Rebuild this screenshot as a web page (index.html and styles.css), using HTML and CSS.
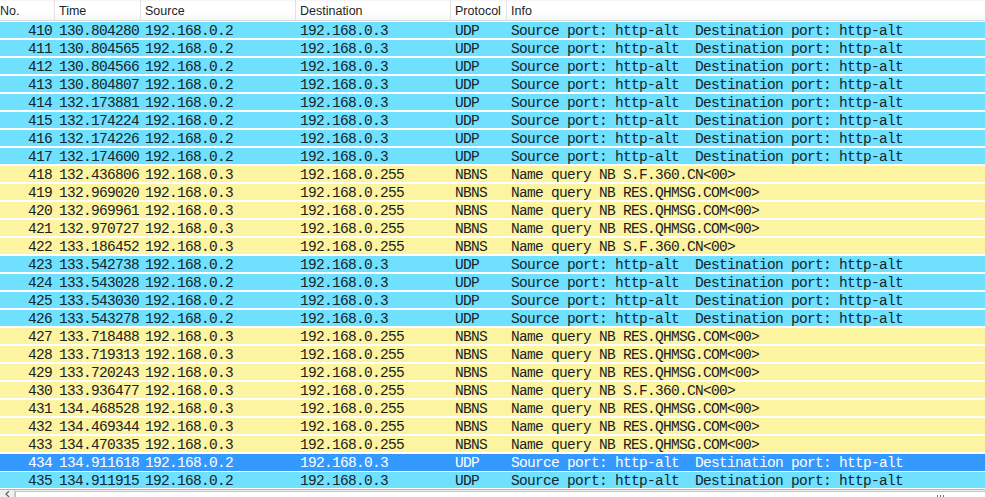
FILE: index.html
```html
<!DOCTYPE html>
<html>
<head>
<meta charset="utf-8">
<link rel="stylesheet" href="styles.css">
</head>
<body>
<div class="list">
  <div class="head">
    <div class="hc c-no">No.</div>
    <div class="hc">Time</div>
    <div class="hc">Source</div>
    <div class="hc">Destination</div>
    <div class="hc">Protocol</div>
    <div class="hc">Info</div>
  </div>
  <div class="rows">
    <div class="row udp"><span class="no">410</span><span>130.804280</span><span>192.168.0.2</span><span>192.168.0.3</span><span>UDP</span><span>Source port: http-alt  Destination port: http-alt</span></div>
    <div class="row udp"><span class="no">411</span><span>130.804565</span><span>192.168.0.2</span><span>192.168.0.3</span><span>UDP</span><span>Source port: http-alt  Destination port: http-alt</span></div>
    <div class="row udp"><span class="no">412</span><span>130.804566</span><span>192.168.0.2</span><span>192.168.0.3</span><span>UDP</span><span>Source port: http-alt  Destination port: http-alt</span></div>
    <div class="row udp"><span class="no">413</span><span>130.804807</span><span>192.168.0.2</span><span>192.168.0.3</span><span>UDP</span><span>Source port: http-alt  Destination port: http-alt</span></div>
    <div class="row udp"><span class="no">414</span><span>132.173881</span><span>192.168.0.2</span><span>192.168.0.3</span><span>UDP</span><span>Source port: http-alt  Destination port: http-alt</span></div>
    <div class="row udp"><span class="no">415</span><span>132.174224</span><span>192.168.0.2</span><span>192.168.0.3</span><span>UDP</span><span>Source port: http-alt  Destination port: http-alt</span></div>
    <div class="row udp"><span class="no">416</span><span>132.174226</span><span>192.168.0.2</span><span>192.168.0.3</span><span>UDP</span><span>Source port: http-alt  Destination port: http-alt</span></div>
    <div class="row udp"><span class="no">417</span><span>132.174600</span><span>192.168.0.2</span><span>192.168.0.3</span><span>UDP</span><span>Source port: http-alt  Destination port: http-alt</span></div>
    <div class="row nbns"><span class="no">418</span><span>132.436806</span><span>192.168.0.3</span><span>192.168.0.255</span><span>NBNS</span><span>Name query NB S.F.360.CN&lt;00&gt;</span></div>
    <div class="row nbns"><span class="no">419</span><span>132.969020</span><span>192.168.0.3</span><span>192.168.0.255</span><span>NBNS</span><span>Name query NB RES.QHMSG.COM&lt;00&gt;</span></div>
    <div class="row nbns"><span class="no">420</span><span>132.969961</span><span>192.168.0.3</span><span>192.168.0.255</span><span>NBNS</span><span>Name query NB RES.QHMSG.COM&lt;00&gt;</span></div>
    <div class="row nbns"><span class="no">421</span><span>132.970727</span><span>192.168.0.3</span><span>192.168.0.255</span><span>NBNS</span><span>Name query NB RES.QHMSG.COM&lt;00&gt;</span></div>
    <div class="row nbns"><span class="no">422</span><span>133.186452</span><span>192.168.0.3</span><span>192.168.0.255</span><span>NBNS</span><span>Name query NB S.F.360.CN&lt;00&gt;</span></div>
    <div class="row udp"><span class="no">423</span><span>133.542738</span><span>192.168.0.2</span><span>192.168.0.3</span><span>UDP</span><span>Source port: http-alt  Destination port: http-alt</span></div>
    <div class="row udp"><span class="no">424</span><span>133.543028</span><span>192.168.0.2</span><span>192.168.0.3</span><span>UDP</span><span>Source port: http-alt  Destination port: http-alt</span></div>
    <div class="row udp"><span class="no">425</span><span>133.543030</span><span>192.168.0.2</span><span>192.168.0.3</span><span>UDP</span><span>Source port: http-alt  Destination port: http-alt</span></div>
    <div class="row udp"><span class="no">426</span><span>133.543278</span><span>192.168.0.2</span><span>192.168.0.3</span><span>UDP</span><span>Source port: http-alt  Destination port: http-alt</span></div>
    <div class="row nbns"><span class="no">427</span><span>133.718488</span><span>192.168.0.3</span><span>192.168.0.255</span><span>NBNS</span><span>Name query NB RES.QHMSG.COM&lt;00&gt;</span></div>
    <div class="row nbns"><span class="no">428</span><span>133.719313</span><span>192.168.0.3</span><span>192.168.0.255</span><span>NBNS</span><span>Name query NB RES.QHMSG.COM&lt;00&gt;</span></div>
    <div class="row nbns"><span class="no">429</span><span>133.720243</span><span>192.168.0.3</span><span>192.168.0.255</span><span>NBNS</span><span>Name query NB RES.QHMSG.COM&lt;00&gt;</span></div>
    <div class="row nbns"><span class="no">430</span><span>133.936477</span><span>192.168.0.3</span><span>192.168.0.255</span><span>NBNS</span><span>Name query NB S.F.360.CN&lt;00&gt;</span></div>
    <div class="row nbns"><span class="no">431</span><span>134.468528</span><span>192.168.0.3</span><span>192.168.0.255</span><span>NBNS</span><span>Name query NB RES.QHMSG.COM&lt;00&gt;</span></div>
    <div class="row nbns"><span class="no">432</span><span>134.469344</span><span>192.168.0.3</span><span>192.168.0.255</span><span>NBNS</span><span>Name query NB RES.QHMSG.COM&lt;00&gt;</span></div>
    <div class="row nbns"><span class="no">433</span><span>134.470335</span><span>192.168.0.3</span><span>192.168.0.255</span><span>NBNS</span><span>Name query NB RES.QHMSG.COM&lt;00&gt;</span></div>
    <div class="row sel"><span class="no">434</span><span>134.911618</span><span>192.168.0.2</span><span>192.168.0.3</span><span>UDP</span><span>Source port: http-alt  Destination port: http-alt</span></div>
    <div class="row udp"><span class="no">435</span><span>134.911915</span><span>192.168.0.2</span><span>192.168.0.3</span><span>UDP</span><span>Source port: http-alt  Destination port: http-alt</span></div>
  </div>
  <div class="hscroll">
    <div class="arrow"><svg width="5" height="6" viewBox="0 0 5 6"><path d="M4 0 L1 3 L4 6" fill="none" stroke="#606060" stroke-width="1.2"/></svg></div>
    <div class="thumb"><span class="grip"></span></div>
  </div>
</div>
</body>
</html>
```
FILE: styles.css
```css
html, body {
  margin: 0;
  padding: 0;
  background: #ffffff;
  overflow: hidden;
}
.list {
  width: 985px;
  height: 497px;
  display: flex;
  flex-direction: column;
  overflow: hidden;
}
.head {
  height: 20px;
  display: grid;
  grid-template-columns: 55px 86px 155px 155px 56px 1fr;
  background: linear-gradient(#f2f2f2 0, #ffffff 2px, #ffffff 60%, #f6f7f8 100%);
  border-bottom: 1px solid #d8d8d8;
  font-family: "Liberation Sans", Arial, sans-serif;
  font-size: 12.5px;
  color: #1e1e1e;
}
.hc {
  padding-left: 4px;
  line-height: 23px;
  border-right: 1px solid #e3e3e3;
  white-space: nowrap;
  overflow: hidden;
}
.hc.c-no {
  padding-left: 0;
}
.hc:last-child {
  border-right: none;
}
.rows {
  display: flex;
  flex-direction: column;
}
.row {
  height: 16px;
  border-top: 1px solid #ffffff;
  border-bottom: 1px solid #ffffff;
  display: grid;
  grid-template-columns: 55px 86px 155px 155px 56px 1fr;
  font-family: "Liberation Mono", "DejaVu Sans Mono", monospace;
  font-size: 14.5px;
  letter-spacing: -0.7px;
  line-height: 19px;
  white-space: pre;
}
.row span {
  padding-left: 4px;
  overflow: hidden;
  height: 16px;
}
.row span.no {
  padding-left: 0;
  padding-right: 3px;
  text-align: right;
}
.udp {
  background: #70e0ff;
  color: #12272e;
}
.nbns {
  background: #fcf4a0;
  color: #1e1e1e;
}
.sel {
  background: #3399ff;
  color: #ffffff;
  border-bottom-color: #3399ff;
}
.hscroll {
  height: 7px;
  border-top: 1px solid #b4b4b4;
  background: #f0f0f0;
  display: flex;
}
.arrow {
  width: 14px;
  display: flex;
  align-items: flex-end;
  justify-content: center;
  border-right: 1px solid #c8c8c8;
}
.thumb {
  flex: 1;
  margin-top: 1px;
  background: #ffffff;
  border-left: 1px solid #c4c4c4;
  border-top: 1px solid #c4c4c4;
  position: relative;
}
.grip {
  position: absolute;
  left: 921px;
  top: 3px;
  width: 7px;
  height: 3px;
  background: repeating-linear-gradient(90deg, #707070 0 1px, transparent 1px 3px);
}
```
